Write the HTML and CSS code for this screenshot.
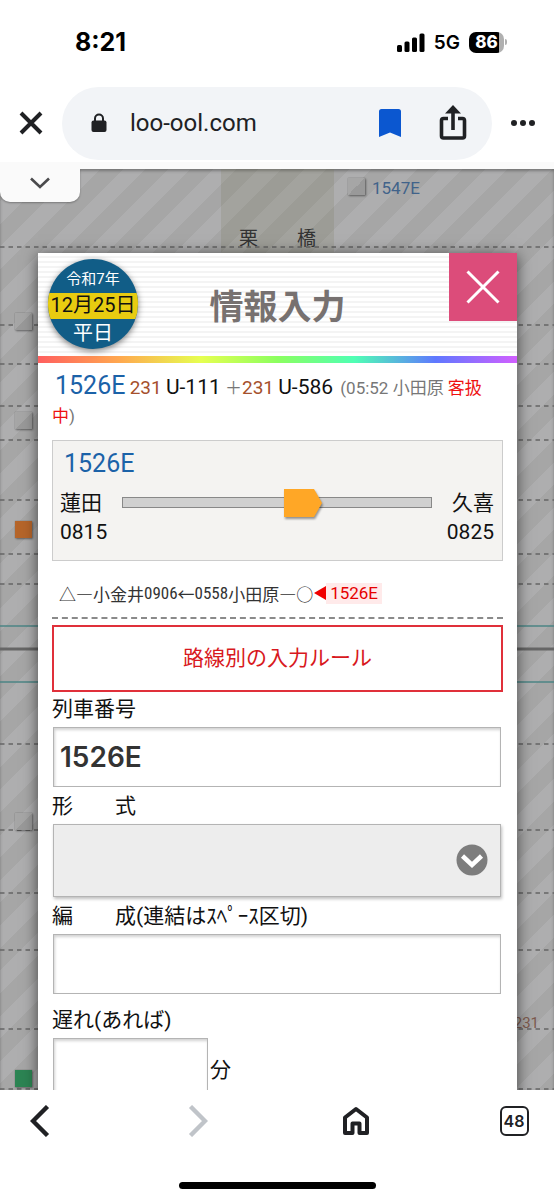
FILE: index.html
```html
<!DOCTYPE html>
<html lang="ja">
<head>
<meta charset="utf-8">
<meta name="viewport" content="width=device-width, initial-scale=1">
<title>情報入力</title>
<link rel="stylesheet" href="styles.css">
</head>
<body>
<header class="chrome-top">
  <div class="status">
    <span class="clock">8:21</span>
    <div class="status-right">
      <svg class="signal" viewBox="0 0 28 19" width="28" height="19"><rect x="0" y="12" width="5" height="7" rx="1.5"/><rect x="7.500" y="8.500" width="5" height="10.500" rx="1.500"/><rect x="15" y="4.500" width="5" height="14.500" rx="1.500"/><rect x="22.500" y="0.500" width="5" height="18.500" rx="1.500"/></svg>
      <span class="net">5G</span>
      <span class="battery">86</span>
    </div>
  </div>
  <div class="toolbar">
    <button class="icon-btn close-tab" aria-label="閉じる"><svg viewBox="0 0 24 24" width="24" height="24"><path d="M2 2 22 22M22 2 2 22" fill="none" stroke="#202124" stroke-width="4"/></svg></button>
    <div class="omnibox">
      <svg class="lock" viewBox="0 0 16 20" width="16" height="20"><path d="M4 9V5.500a4 4 0 0 1 8 0V9" fill="none" stroke="#202124" stroke-width="2"/><rect x="0.500" y="7.500" width="15" height="11.500" rx="2" fill="#202124"/></svg>
      <span class="url">loo-ool.com</span>
      <button class="icon-btn" aria-label="ブックマーク"><svg viewBox="0 0 22 28" width="22" height="28"><path d="M2.500 0h17A2.500 2.500 0 0 1 22 2.500V28L11 23.500 0 28V2.500A2.500 2.500 0 0 1 2.500 0z" fill="#0b57d0"/></svg></button>
      <button class="icon-btn share" aria-label="共有"><svg viewBox="0 0 28 36" width="28" height="36"><g fill="none" stroke="#202124" stroke-width="3.600"><path d="M9 13.500H4.500a2 2 0 0 0-2 2V31a2 2 0 0 0 2 2h19a2 2 0 0 0 2-2V15.500a2 2 0 0 0-2-2H19" stroke-linejoin="round"/><path d="M14 25V4"/></g><path d="M14 0 22 8.500H6z" fill="#202124"/></svg></button>
    </div>
    <button class="icon-btn" aria-label="メニュー"><svg viewBox="0 0 26 8" width="26" height="8" fill="#202124"><circle cx="4" cy="4" r="3"/><circle cx="13" cy="4" r="3"/><circle cx="22" cy="4" r="3"/></svg></button>
  </div>
</header>

<main class="view">
  <div class="diagram">
    <div class="station-band"><span>栗</span><span>橋</span></div>
    <svg class="tracks" width="100%" height="100%">
      <g class="dash">
        <line x2="100%" y1="78" y2="78"/><line x2="100%" y1="156" y2="156"/><line x2="100%" y1="195" y2="195"/><line x2="100%" y1="237" y2="237"/><line x2="100%" y1="271" y2="271"/><line x2="100%" y1="331" y2="331"/><line x2="100%" y1="385" y2="385"/><line x2="100%" y1="415" y2="415"/><line x2="100%" y1="575" y2="575"/><line x2="100%" y1="661" y2="661"/><line x2="100%" y1="724" y2="724"/><line x2="100%" y1="781" y2="781"/><line x2="100%" y1="860" y2="860"/><line x2="100%" y1="920" y2="920"/>
      </g>
      <g class="teal"><line x2="100%" y1="457" y2="457"/><line x2="100%" y1="513" y2="513"/></g>
      <line class="thick" x2="100%" y1="480" y2="480"/>
    </svg>
    <i class="mark m1"></i><i class="mark m2"></i><i class="mark m3"></i><i class="mark orange m4"></i><i class="mark m5"></i><i class="mark green m6"></i>
    <span class="train-no">1547E</span>
    <span class="unit-no">231</span>
  </div>
  <button class="pull-tab" aria-label="開く"><svg viewBox="0 0 20 12" width="20" height="12"><path d="M1 1.500 10 10l9-8.500" fill="none" stroke="#4a4a4c" stroke-width="2.600"/></svg></button>

  <section class="dialog" role="dialog" aria-labelledby="title">
    <div class="dialog-head">
      <div class="date-badge"><span class="era">令和7年</span><span class="day">12月25日</span><span class="kind">平日</span></div>
      <h1 id="title">情報入力</h1>
      <button class="dialog-close" aria-label="閉じる"><svg viewBox="0 0 34 34" width="34" height="34"><path d="M1.500 1.500 32.500 32.500M32.500 1.500 1.500 32.500" stroke="#fff" stroke-width="3"/></svg></button>
    </div>
    <div class="rainbow"></div>
    <form class="content">
      <p class="summary"><a class="train">1526E</a> <span class="series">231</span> <span class="unit">U-111</span> <span class="plus">＋</span><span class="series">231</span> <span class="unit">U-586</span> <span class="note">(05:52 小田原 <b>客扱中</b>)</span></p>

      <div class="position">
        <a class="train">1526E</a>
        <div class="leg">
          <div class="stop">蓮田<br>0815</div>
          <div class="rail"><svg class="car" viewBox="0 0 40 32" width="40" height="32"><path d="M1 1h30l8 14-8 14H1z" fill="#ffa726"/></svg></div>
          <div class="stop end">久喜<br>0825</div>
        </div>
      </div>

      <p class="route">△―小金井<span class="nr">0906</span>←<span class="nr">0558</span>小田原―○<svg class="tri" viewBox="0 0 12 16" width="12" height="16"><path d="M12 0v14L0 7z" fill="#f00000"/></svg><span class="now">1526E</span></p>

      <button type="button" class="rules">路線別の入力ルール</button>

      <label for="no">列車番号</label>
      <input id="no" class="field number" value="1526E">
      <label for="type">形　　式</label>
      <div class="pick">
        <select id="type"><option></option></select>
        <svg viewBox="0 0 32 32" width="32" height="32"><circle cx="16" cy="16" r="15.500" fill="#7d7d7d"/><path d="M6.500 12 16 21l9.500-9" fill="none" stroke="#fff" stroke-width="4.500"/></svg>
      </div>
      <label for="cars">編　　成(連結はｽﾍﾟｰｽ区切)</label>
      <input id="cars" class="field">
      <label for="late" class="late-label">遅れ(あれば)</label>
      <div class="late"><input id="late" class="field"><span>分</span></div>
    </form>
  </section>
</main>

<footer class="chrome-bottom">
  <nav class="nav">
    <button class="icon-btn" aria-label="戻る"><svg viewBox="0 0 20 32" width="20" height="32"><path d="M17.500 1.500 3 16l14.500 14.500" fill="none" stroke="#202124" stroke-width="4.400"/></svg></button>
    <button class="icon-btn" aria-label="進む"><svg viewBox="0 0 20 32" width="20" height="32"><path d="M2.500 1.500 17 16 2.500 30.500" fill="none" stroke="#c0c4c9" stroke-width="4.400"/></svg></button>
    <button class="icon-btn" aria-label="ホーム"><svg viewBox="0 0 26 30" width="26" height="30"><path d="M2 11.500 13 3l11 8.500V27h-7.500V17.500h-7V27H2z" fill="none" stroke="#202124" stroke-width="4" stroke-linejoin="round"/></svg></button>
    <button class="icon-btn" aria-label="タブ"><span class="tabs">48</span></button>
  </nav>
  <div class="home-bar"></div>
</footer>
</body>
</html>
```
FILE: styles.css
```css
* { box-sizing: border-box; }
body {
  margin: 0;
  height: 100vh;
  display: flex;
  flex-direction: column;
  background: #fff;
  color: #111;
  font-family: Roboto, "Noto Sans CJK JP", sans-serif;
  overflow: hidden;
}
svg { display: block; }
button { border: 0; padding: 0; background: none; font: inherit; color: inherit; }
p, h1 { margin: 0; }

.chrome-top { flex: none; border-bottom: 7px solid #fafafa; }
.status {
  display: flex;
  justify-content: space-between;
  align-items: center;
  height: 84px;
  padding: 0 50px 0 75px;
  font-family: Inter, sans-serif;
  color: #000;
}
.clock { font-size: 25px; font-weight: 700; }
.status-right { display: flex; align-items: center; gap: 9px; }
.net { font-size: 19px; font-weight: 600; }
.battery {
  position: relative;
  width: 35px;
  height: 21px;
  border-radius: 7px;
  background: linear-gradient(90deg, #000 86%, #b0b0b0 86%);
  color: #fff;
  font-size: 17px;
  font-weight: 800;
  line-height: 21px;
  text-align: center;
}
.battery::after {
  content: "";
  position: absolute;
  left: 36px;
  top: 7px;
  width: 2px;
  height: 6px;
  border-radius: 0 2px 2px 0;
  background: #b0b0b0;
}
.toolbar {
  display: flex;
  align-items: center;
  justify-content: space-between;
  height: 78px;
  padding: 0 18px 0 19px;
}
.icon-btn { display: block; flex: none; }
.omnibox {
  display: flex;
  align-items: center;
  flex: 1;
  height: 73px;
  margin: 0 18px 0 19px;
  padding: 0 25px 0 29px;
  border-radius: 37px;
  background: #f2f4f7;
}
.url { flex: 1; margin-left: 23px; font-size: 24px; color: #202124; }
.share { margin-left: 38px; }

.view { position: relative; flex: 1; min-height: 0; overflow: hidden; padding: 84px 37px 0 38px; }
.diagram {
  position: absolute;
  inset: 0;
  background: repeating-linear-gradient(135deg, #aeaeaf 0 7px, #a6a6a6 7px 23px, #aeaeaf 23px 32px);
  box-shadow: inset 0 2px 3px rgba(0, 0, 0, .3);
}
.station-band {
  position: absolute;
  left: 221px;
  top: 0;
  width: 113px;
  height: 130px;
  padding: 54px 18px 0;
  display: flex;
  justify-content: space-between;
  background: rgba(120, 120, 90, .2);
  font-size: 19px;
  color: #333;
}
.tracks { position: absolute; inset: 0; }
.dash line { stroke: #666; stroke-width: 1.500px; stroke-dasharray: 4.500 4; }
.teal line { stroke: #4b8585; stroke-width: 1.500px; }
.thick { stroke: #666; stroke-width: 3px; }
.mark {
  position: absolute;
  left: 15px;
  width: 17px;
  height: 17px;
  background: linear-gradient(135deg, #a6a6a6 50%, #999 50%);
  box-shadow: 1px 1px 2px rgba(0, 0, 0, .4), 0 0 1px rgba(0, 0, 0, .3);
}
.m1 { left: 348px; top: 9px; }
.m2 { top: 144px; }
.m3 { top: 243px; }
.m4 { top: 352px; }
.m5 { top: 644px; }
.m6 { top: 901px; }
.orange { background: #b5652a; }
.green { background: #2c8453; }
.train-no { position: absolute; left: 372px; top: 9px; font-size: 17px; line-height: 20px; color: #41638a; }
.unit-no { position: absolute; right: 15px; top: 844px; font-size: 15px; line-height: 20px; color: #7d5a4e; }
.pull-tab {
  position: absolute;
  left: 0;
  top: 0;
  width: 80px;
  height: 33px;
  padding: 8px 30px 13px;
  border-radius: 0 0 10px 10px;
  background: #fafafa;
  box-shadow: 0 1px 2px rgba(0, 0, 0, .3);
}

.dialog { position: relative; background: #fff; box-shadow: 0 2px 14px rgba(0, 0, 0, .6); }
.dialog-head {
  position: relative;
  display: flex;
  align-items: center;
  justify-content: center;
  height: 103px;
  padding-top: 4px;
  background: repeating-linear-gradient(180deg, #fff 0 3px, #f4f4f4 3px 5px);
}
.dialog-head h1 { font-size: 34px; line-height: 48px; font-weight: 700; color: #777170; }
.date-badge {
  position: absolute;
  left: 10px;
  top: 6px;
  width: 90px;
  height: 90px;
  overflow: hidden;
  border-radius: 50%;
  background: #115d87;
  color: #fff;
  text-align: center;
  box-shadow: 0 2px 6px rgba(0, 0, 0, .5);
  display: flex;
  flex-direction: column;
}
.era { height: 34px; padding-top: 7px; font-size: 15px; line-height: 26px; }
.day { height: 26px; background: #e8cc10; color: #111; font-size: 20px; line-height: 24px; white-space: nowrap; }
.kind { font-size: 20px; line-height: 29px; }
.dialog-close {
  position: absolute;
  right: 0;
  top: 0;
  display: flex;
  align-items: center;
  justify-content: center;
  width: 68px;
  height: 68px;
  background: #dc4c7a;
}
.rainbow { height: 7px; background: linear-gradient(90deg, #ff5f5f, #ffa84f 17%, #e6ff50 34%, #8bff5f 50%, #4fffb4 66%, #5f78ff 83%, #d25fff); }

.content { display: flex; flex-direction: column; padding: 9px 14px 20px; }
.train { color: #1b62a8; font-size: 25px; line-height: 28px; }
.summary { padding-bottom: 10px; font-size: 17px; line-height: 28px; }
.summary .train { margin-left: 3px; }
.series { color: #a5502c; font-size: 19px; }
.unit { font-size: 21px; }
.plus { color: #777; }
.note { margin-left: 3px; color: #777; }
.note b { font-weight: 400; color: #ee1111; }

.position { padding: 9px 8px 13px 7px; border: 1px solid #ccc; background: #f4f3f1; }
.position .train { display: block; margin-left: 4px; }
.leg { display: flex; justify-content: space-between; gap: 15px; padding-top: 11px; font-size: 21px; line-height: 29px; }
.end { text-align: right; }
.rail { flex: 1; position: relative; height: 11px; margin-top: 8px; border: 1px solid #888; background: #d0d0d0; }
.car { position: absolute; left: 52%; top: -10px; filter: drop-shadow(1px 2px 1px rgba(0, 0, 0, .4)); }

.route {
  display: flex;
  align-items: center;
  margin: 20px 0 6px;
  padding: 0 7px 11px;
  border-bottom: 2px dashed #8a8a8a;
  color: #333;
  font-family: "Noto Sans CJK JP", sans-serif;
  font-size: 17px;
  line-height: 25px;
}
.nr { font-family: "Roboto Condensed", "Liberation Sans Narrow", "Noto Sans CJK JP", sans-serif; }
.tri { margin-left: 1px; }
.now { padding: 0 4px; line-height: 21px; background: #ffeaea; color: #e60000; font-family: Roboto, sans-serif; }

.rules { height: 67px; padding-bottom: 6px; border: 2px solid #e0303a; color: #d81820; font-size: 21px; }
label { font-size: 21px; line-height: 35px; }
.field, .pick { margin: 0 2px 0 1px; }
.field {
  height: 60px;
  padding: 0 6px;
  border: 1px solid #b4b4b4;
  border-radius: 0;
  background: #fff;
  box-shadow: inset 1px 2px 3px rgba(0, 0, 0, .18);
  color: #333;
  font: 600 28px/32px Inter, sans-serif;
}
.number { margin-bottom: 2px; }
.pick { position: relative; margin-bottom: 2px; }
.pick select {
  display: block;
  width: 100%;
  height: 73px;
  appearance: none;
  border: 1px solid #b4b4b4;
  border-radius: 0;
  background: #ededed;
  box-shadow: 1px 2px 3px rgba(0, 0, 0, .25);
}
.pick svg { position: absolute; right: 13px; top: 20px; pointer-events: none; }
.late-label { padding-top: 9px; }
.late { display: flex; align-items: center; font-size: 21px; }
.late .field { width: 155px; }

.chrome-bottom { flex: none; position: relative; background: #fff; padding: 15px 24px 11px; }
.nav { display: flex; justify-content: space-between; align-items: center; height: 32px; }
.nav .icon-btn { display: flex; justify-content: center; width: 32px; }
.tabs { width: 29px; height: 30px; border: 2px solid #202124; border-radius: 6px; color: #202124; font: 600 16px/26px Inter, sans-serif; }
.home-bar { width: 197px; height: 7px; margin: 45px auto 0; border-radius: 4px; background: #000; }
```
